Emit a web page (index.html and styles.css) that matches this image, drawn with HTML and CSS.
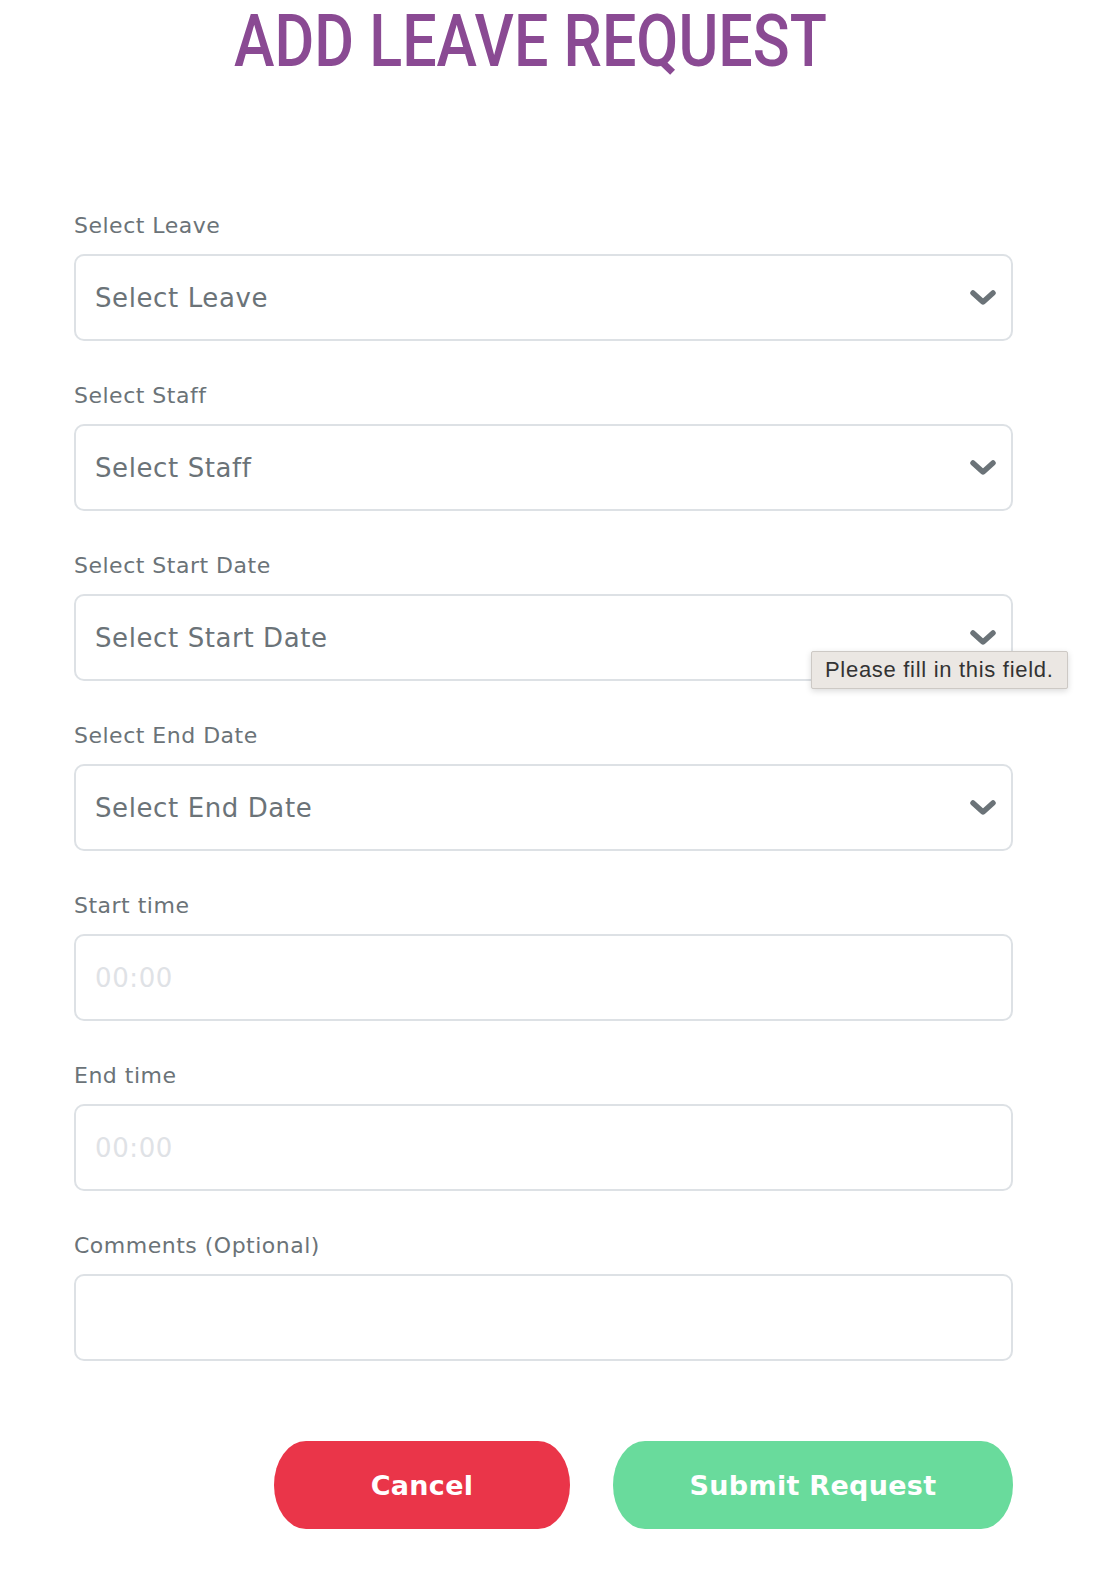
FILE: index.html
```html
<!DOCTYPE html>
<html lang="en">
<head>
    <meta charset="UTF-8">
    <meta name="viewport" content="width=device-width, initial-scale=1.0">
    <title>Add Leave Request</title>
    <link rel="stylesheet" href="styles.css">
</head>
<body>
    <div class="container">
        <div class="title-wrap">
            <h1 class="page-title">ADD LEAVE REQUEST</h1>
        </div>

        <form id="leaveForm" class="leave-form">
            <div class="form-group">
                <label class="form-label" for="leaveType">Select Leave</label>
                <div class="select-box">
                    <select id="leaveType" required>
                        <option value="">Select Leave</option>
                    </select>
                    <svg class="chevron" viewBox="0 0 26 16" width="26" height="16"><path d="M3 3 L13 12 L23 3" fill="none" stroke="#6b7378" stroke-width="5.5" stroke-linecap="round" stroke-linejoin="round"/></svg>
                </div>
            </div>

            <div class="form-group">
                <label class="form-label" for="staff">Select Staff</label>
                <div class="select-box">
                    <select id="staff" required>
                        <option value="">Select Staff</option>
                    </select>
                    <svg class="chevron" viewBox="0 0 26 16" width="26" height="16"><path d="M3 3 L13 12 L23 3" fill="none" stroke="#6b7378" stroke-width="5.5" stroke-linecap="round" stroke-linejoin="round"/></svg>
                </div>
            </div>

            <div class="form-group">
                <label class="form-label" for="startDate">Select Start Date</label>
                <div class="select-box">
                    <select id="startDate" required>
                        <option value="">Select Start Date</option>
                    </select>
                    <svg class="chevron" viewBox="0 0 26 16" width="26" height="16"><path d="M3 3 L13 12 L23 3" fill="none" stroke="#6b7378" stroke-width="5.5" stroke-linecap="round" stroke-linejoin="round"/></svg>
                    <div class="tooltip">Please fill in this field.</div>
                </div>
            </div>

            <div class="form-group">
                <label class="form-label" for="endDate">Select End Date</label>
                <div class="select-box">
                    <select id="endDate" required>
                        <option value="">Select End Date</option>
                    </select>
                    <svg class="chevron" viewBox="0 0 26 16" width="26" height="16"><path d="M3 3 L13 12 L23 3" fill="none" stroke="#6b7378" stroke-width="5.5" stroke-linecap="round" stroke-linejoin="round"/></svg>
                </div>
            </div>

            <div class="form-group">
                <label class="form-label" for="startTime">Start time</label>
                <input type="text" id="startTime" class="text-input" placeholder="00:00">
            </div>

            <div class="form-group">
                <label class="form-label" for="endTime">End time</label>
                <input type="text" id="endTime" class="text-input" placeholder="00:00">
            </div>

            <div class="form-group">
                <label class="form-label" for="comments">Comments (Optional)</label>
                <input type="text" id="comments" class="text-input">
            </div>

            <div class="form-actions">
                <button type="button" class="btn btn-cancel">Cancel</button>
                <button type="submit" class="btn btn-submit">Submit Request</button>
            </div>
        </form>
    </div>
</body>
</html>
```

FILE: styles.css
```css
body {
    font-family: 'DejaVu Sans', sans-serif;
    margin: 0;
    padding: 0;
    background: #fff;
    color: #6b7378;
}

.container {
    width: 939px;
    padding: 0 0 40px 74px;
}

.title-wrap {
    height: 84px;
    margin-bottom: 125px;
    padding-left: 160px;
}

.page-title {
    display: inline-block;
    font-family: 'Roboto', sans-serif;
    font-weight: 500;
    font-size: 72px;
    line-height: 84px;
    color: #8a4a93;
    margin: 0;
    white-space: nowrap;
    transform: scaleX(0.847);
    transform-origin: left center;
}

.form-group {
    margin-bottom: 38px;
}

.form-label {
    display: block;
    font-size: 22px;
    line-height: 33px;
    letter-spacing: 0.5px;
    margin-bottom: 12px;
    color: #6b7378;
}

.select-box {
    position: relative;
    display: flex;
    align-items: center;
    height: 87px;
    box-sizing: border-box;
    border: 2px solid #dde1e5;
    border-radius: 10px;
    padding: 0 15px 0 19px;
}

.select-box select {
    flex: 1;
    appearance: none;
    -webkit-appearance: none;
    border: none;
    background: transparent;
    font-family: inherit;
    font-size: 26px;
    letter-spacing: 0.6px;
    color: #6b7378;
    outline: none;
    padding: 0;
}

.chevron {
    flex-shrink: 0;
}

.text-input {
    display: block;
    width: 100%;
    height: 87px;
    box-sizing: border-box;
    border: 2px solid #dde1e5;
    border-radius: 10px;
    padding: 0 19px;
    font-family: inherit;
    font-size: 26px;
    letter-spacing: 0.6px;
    color: #6b7378;
    outline: none;
}

.text-input::placeholder {
    color: #dfe2e6;
}

.tooltip {
    position: absolute;
    left: 735px;
    top: 55px;
    padding: 5px 13px 5px 13px;
    background: #ebe7e3;
    border: 1px solid #cdc9c5;
    border-radius: 2px;
    box-shadow: 0 2px 6px rgba(0, 0, 0, 0.15);
    font-family: 'Liberation Sans', sans-serif;
    font-size: 22px;
    line-height: 26px;
    letter-spacing: 0.7px;
    color: #333;
    white-space: nowrap;
}

.form-actions {
    display: flex;
    justify-content: flex-end;
    gap: 43px;
    margin-top: 80px;
}

.btn {
    height: 88px;
    border: none;
    border-radius: 32px / 44px;
    font-family: inherit;
    font-weight: 700;
    font-size: 27px;
    letter-spacing: 0.3px;
    color: #fff;
    cursor: pointer;
}

.btn-cancel {
    width: 296px;
    background-color: #ea3549;
}

.btn-submit {
    width: 400px;
    background-color: #69db9c;
}
```
